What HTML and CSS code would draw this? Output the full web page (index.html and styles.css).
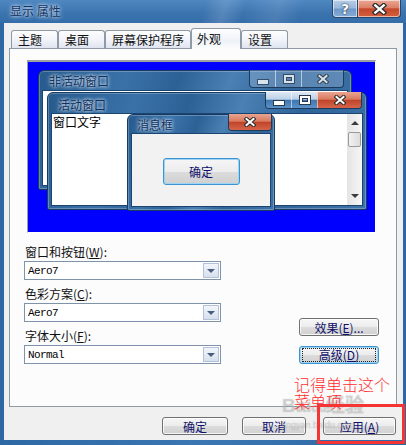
FILE: index.html
```html
<!DOCTYPE html>
<html lang="zh-CN">

<head>
  <meta charset="UTF-8">
  <meta name="viewport" content="width=device-width, initial-scale=1.0">
  <title>显示 属性</title>
  <link rel="stylesheet" href="styles.css">
</head>

<body>
  <svg class="defs" width="0" height="0">
    <defs>
      <symbol id="ico-x" viewBox="0 0 12 10">
        <path d="M2.5 2 L9.5 8 M9.5 2 L2.5 8" stroke="#2b2b2b" stroke-width="4" stroke-linecap="square" fill="none" />
        <path d="M2.5 2 L9.5 8 M9.5 2 L2.5 8" stroke="#fff" stroke-width="2" stroke-linecap="square" fill="none" />
      </symbol>
    </defs>
  </svg>

  <div class="window">
    <div class="titlebar">
      <span class="title">显示 属性</span>
      <div class="caption">
        <span class="cap help">?</span>
        <span class="cap close"><svg width="15" height="12"><use href="#ico-x" /></svg></span>
      </div>
    </div>

    <div class="frame">
      <div class="tabs">
        <div class="tab">主题</div>
        <div class="tab">桌面</div>
        <div class="tab">屏幕保护程序</div>
        <div class="tab selected">外观</div>
        <div class="tab">设置</div>
      </div>

      <div class="panel">
        <div class="preview">
          <div class="desktop">
            <!-- 非活动窗口 -->
            <div class="pw pw-inactive">
              <div class="pw-title">
                <span>非活动窗口</span>
                <div class="pbs">
                  <span class="pb min"><i></i></span>
                  <span class="pb max"><i></i></span>
                  <span class="pb x"><svg width="12" height="10"><use href="#ico-x" /></svg></span>
                </div>
              </div>
              <div class="pw-body"></div>
            </div>

            <!-- 活动窗口 -->
            <div class="pw pw-active">
              <div class="pw-title">
                <span>活动窗口</span>
                <div class="pbs">
                  <span class="pb min"><i></i></span>
                  <span class="pb max"><i></i></span>
                  <span class="pb x red"><svg width="12" height="10"><use href="#ico-x" /></svg></span>
                </div>
              </div>
              <div class="pw-body">
                <span class="win-text">窗口文字</span>
                <div class="sb">
                  <span class="sb-btn"><i class="up"></i></span>
                  <span class="sb-thumb"></span>
                  <span class="sb-fill"></span>
                  <span class="sb-btn"><i class="down"></i></span>
                </div>
              </div>
            </div>

            <!-- 消息框 -->
            <div class="pw pw-msg">
              <div class="pw-title">
                <span>消息框</span>
                <div class="pbs">
                  <span class="pb x red"><svg width="12" height="10"><use href="#ico-x" /></svg></span>
                </div>
              </div>
              <div class="pw-body">
                <button class="btn default">确定</button>
              </div>
            </div>
          </div>
        </div>

        <div class="options">
          <div class="fields">
            <label>窗口和按钮(<u>W</u>):</label>
            <div class="combo"><span>Aero7</span><span class="drop"></span></div>
            <label>色彩方案(<u>C</u>):</label>
            <div class="combo"><span>Aero7</span><span class="drop"></span></div>
            <label>字体大小(<u>F</u>):</label>
            <div class="combo"><span>Normal</span><span class="drop"></span></div>
          </div>
          <div class="side">
            <button class="btn">效果(<u>E</u>)...</button>
            <button class="btn focus"><span>高级(<u>D</u>)</span></button>
          </div>
        </div>
      </div>

      <div class="footer">
        <button class="btn ok">确定</button>
        <button class="btn cancel">取消</button>
        <button class="btn apply">应用(<u>A</u>)</button>
      </div>
    </div>

    <!-- 标注 -->
    <div class="watermark">Bai<span class="paw">du</span>经验<small>jingyan.baidu.com</small></div>
    <div class="note">记得单击这个<br>菜单项</div>
    <div class="mark"></div>
  </div>
</body>

</html>
```

FILE: styles.css
```css
* {
  box-sizing: border-box;
  margin: 0;
  padding: 0
}

body {
  width: 406px;
  height: 445px;
  overflow: hidden;
  font-family: "Noto Sans CJK SC", "Liberation Sans", sans-serif;
  font-size: 12px;
  color: #111;
}

.defs {
  position: absolute;
}

.window {
  position: relative;
  width: 406px;
  height: 445px;
  display: flex;
  flex-direction: column;
  background: linear-gradient(90deg, #2d67a4, #3b76b3 50%, #2d67a4);
}

/* title bar */
.titlebar {
  height: 23px;
  display: flex;
  background:
    linear-gradient(105deg, transparent 50%, rgba(255, 255, 255, .14) 55%, transparent 60%, rgba(255, 255, 255, .1) 68%, transparent 74%),
    linear-gradient(#4f87c1, #3b73ae 60%, #356daa);
}

.title {
  padding: 3px 0 0 10px;
  line-height: 16px;
  color: #15335f;
  text-shadow: 0 0 3px #cfe1f3, 0 0 5px #cfe1f3;
}

.caption {
  display: flex;
  height: 18px;
  margin: 0 5px 0 auto;
}

.cap {
  display: flex;
  align-items: center;
  justify-content: center;
  border: 1px solid #27466d;
  border-top: none;
  box-shadow: inset 0 0 0 1px rgba(255, 255, 255, .55);
}

.cap.help {
  width: 26px;
  border-radius: 0 0 0 4px;
  background: linear-gradient(#b6cde6, #9ab9dc 48%, #6f98c8 52%, #86acd6);
  color: #fff;
  font: bold 14px "DejaVu Sans", sans-serif;
  text-shadow: 0 0 2px #1d3552, 0 0 1px #1d3552;
}

.cap.close {
  width: 43px;
  border-left: none;
  border-radius: 0 0 4px 0;
  background: linear-gradient(#eaa896, #dc8067 46%, #c5482c 52%, #d4603f);
}

/* client */
.frame {
  flex: 1;
  margin: 0 3px 5px 4px;
  padding-top: 5px;
  display: flex;
  flex-direction: column;
  background: #f0f0f0;
}

.tabs {
  display: flex;
  align-items: flex-end;
  height: 20px;
  margin-left: 7px;
  position: relative;
  z-index: 1;
}

.tab {
  min-width: 47px;
  height: 18px;
  padding: 0 6px;
  line-height: 17px;
  white-space: nowrap;
  border: 1px solid #8e9aa6;
  border-bottom: none;
  border-radius: 3px 3px 0 0;
  background: linear-gradient(#fdfdfe, #f2f4f9 50%, #dfe4ef);
}

.tab.selected {
  min-width: 50px;
  height: 21px;
  margin-bottom: -1px;
  padding: 1px 5px 0;
  background: linear-gradient(#fefefe, #eef2f8 60%, #fcfcfc);
}

.panel {
  height: 359px;
  margin: 0 6px 0 5px;
  border: 1px solid #8e9aa6;
  background: #fcfcfc;
}

.preview {
  width: 349px;
  margin: 11px 0 0 17px;
  border: 1px solid #fff;
  border-top: 2px solid #a0a0a0;
  border-left-color: #a0a0a0;
}

.desktop {
  position: relative;
  height: 170px;
  background: #0000ff;
}

/* preview windows */
.pw {
  position: absolute;
  display: flex;
  flex-direction: column;
  padding: 0 3px 3px;
  border: 1px solid #163a62;
  border-radius: 6px 6px 2px 2px;
  background:
    linear-gradient(110deg, #275a8d, #3a72a8 25%, #2c6196 40%, #4a80b4 55%, #2f6498 72%, #3d73a8);
  box-shadow: inset 0 0 0 1px rgba(255, 255, 255, .25);
}

.pw-inactive {
  left: 10px;
  top: 8px;
  width: 314px;
  height: 120px;
}

.pw-active {
  left: 19px;
  top: 30px;
  width: 320px;
  height: 118px;
}

.pw-msg {
  left: 99px;
  top: 52px;
  width: 148px;
  height: 97px;
}

.pw-title {
  display: flex;
  height: 19px;
}

.pw-active .pw-title {
  height: 20px;
}

.pw-msg .pw-title {
  height: 18px;
}

.pw-title>span {
  padding: 3px 0 0 7px;
  line-height: 14px;
  color: #13305a;
  text-shadow: 0 0 3px #d6e6f6, 0 0 4px #d6e6f6;
}

.pw-active .pw-title>span {
  padding-top: 5px;
}

.pw-msg .pw-title>span {
  padding-left: 6px;
}

.pbs {
  display: flex;
  height: 18px;
  margin: -1px 4px 0 auto;
  border: 1px solid #1c3a5c;
  border-top: none;
  border-radius: 0 0 4px 4px;
  overflow: hidden;
}

.pw-active .pbs {
  height: 17px;
  margin-right: 1px;
}

.pw-msg .pbs {
  height: 17px;
  margin-right: -1px;
}

.pb {
  display: flex;
  align-items: center;
  justify-content: center;
  width: 25px;
  border-left: 1px solid rgba(255, 255, 255, .55);
  background: rgba(190, 210, 235, .3);
}

.pb:first-child {
  border-left: none;
}

.pb.max {
  width: 26px;
}

.pb.x {
  width: 42px;
}

.pw-active .pb {
  background: linear-gradient(#dfe9f4, #bcd1e7 45%, #3f77b1 52%, #5c92c8);
}

.pw-active .pb.x {
  width: 44px;
}

.pb.red,
.pw-active .pb.red {
  background: linear-gradient(#eba592, #d97a5f 45%, #c0442a 52%, #d6654a);
}

.pb.min i {
  width: 10px;
  height: 4px;
  margin-top: 6px;
  background: #fff;
  box-shadow: 0 0 0 1px #2a3a4e;
}

.pb.max i {
  width: 10px;
  height: 8px;
  border: 2px solid #fff;
  box-shadow: 0 0 0 1px #2a3a4e, inset 0 0 0 1px #2a3a4e;
}

.pw-inactive .pb i,
.pw-inactive .pb svg {
  opacity: .75;
}

.pw-body {
  flex: 1;
  display: flex;
  background: #fff;
  border: 1px solid #1b4470;
}

.win-text {
  padding: 1px 0 0 1px;
  line-height: 14px;
  color: #000;
}

.sb {
  width: 15px;
  margin-left: auto;
  display: flex;
  flex-direction: column;
  background: linear-gradient(90deg, #e4e4e4, #f6f6f6);
}

.sb-btn {
  height: 18px;
  display: flex;
  align-items: center;
  justify-content: center;
}

.sb-thumb {
  height: 15px;
  margin: 0 1px;
  border: 1px solid #9a9a9a;
  border-radius: 2px;
  background: linear-gradient(90deg, #f2f2f2, #dcdcdc);
}

.sb-fill {
  flex: 1;
}

.sb-btn i {
  width: 0;
  border-left: 4px solid transparent;
  border-right: 4px solid transparent;
}

.sb-btn .up {
  border-bottom: 4px solid #3a3a3a;
}

.sb-btn .down {
  border-top: 4px solid #3a3a3a;
}

.pw-msg .pw-body {
  justify-content: center;
  align-items: flex-start;
  padding-top: 24px;
  background: #f2f2f2;
}

/* buttons */
.btn {
  height: 18px;
  border: 1px solid #707070;
  border-radius: 3px;
  background: linear-gradient(#f6f6f6, #ececec 50%, #dcdcdc 52%, #d0d0d0);
  box-shadow: inset 0 0 0 1px rgba(255, 255, 255, .8);
  font: 12px "Noto Sans CJK SC", "Liberation Sans", sans-serif;
  line-height: 15px;
  color: #10106a;
}

.btn.default {
  width: 77px;
  height: 27px;
  border-color: #3c95d0;
  box-shadow: inset 0 0 0 1px #9fd3f3;
}

.btn.focus {
  border-color: #3c95d0;
  box-shadow: inset 0 0 0 1px #9fd3f3;
}

.btn.focus span {
  display: block;
  margin: 0 2px;
  border: 1px dotted #222;
  line-height: 12px;
}

/* options */
.options {
  display: flex;
  justify-content: space-between;
  align-items: flex-end;
  margin-top: 12px;
  padding: 0 17px 0 14px;
}

.fields {
  width: 197px;
}

.fields label {
  display: block;
  height: 14px;
  margin-bottom: 2px;
  padding-left: 1px;
  line-height: 14px;
  color: #111;
}

.combo {
  display: flex;
  align-items: center;
  height: 19px;
  margin-bottom: 7px;
  padding: 0 1px 0 3px;
  border: 1px solid #7f93aa;
  background: #fff;
  font: 11px "Liberation Mono", monospace;
  letter-spacing: -0.6px;
  color: #000;
}

.combo:last-child {
  margin-bottom: 0;
}

.drop {
  width: 16px;
  height: 15px;
  margin-left: auto;
  display: flex;
  align-items: center;
  justify-content: center;
  border: 1px solid #b3c2d6;
  background: linear-gradient(#f2f6fb, #d6e0ec);
}

.drop::after {
  content: '';
  border-left: 4px solid transparent;
  border-right: 4px solid transparent;
  border-top: 4px solid #4a5d80;
}

.side {
  display: flex;
  flex-direction: column;
  gap: 10px;
}

.side .btn {
  width: 80px;
}

/* footer */
.footer {
  display: flex;
  justify-content: flex-end;
  padding: 10px 7px 0 0;
}

.btn.ok {
  width: 66px;
}

.btn.cancel {
  width: 64px;
  margin-left: 14px;
}

.btn.apply {
  width: 73px;
  margin-left: 17px;
}

/* annotation */
.note {
  position: absolute;
  left: 294px;
  top: 376px;
  font-size: 16px;
  line-height: 17px;
  font-weight: 300;
  color: #ff2e2e;
}

.mark {
  position: absolute;
  left: 317px;
  top: 404px;
  width: 88px;
  height: 40px;
  border: 3px solid #f53434;
}

.watermark {
  position: absolute;
  left: 282px;
  top: 396px;
  font: bold 19px "Liberation Sans", sans-serif;
  line-height: 20px;
  color: rgba(255, 255, 255, .35);
  text-shadow: 0 0 1px rgba(90, 90, 90, .45);
}

.watermark .paw {
  font-size: 12px;
}

.watermark small {
  display: block;
  font: 9px "Liberation Sans", sans-serif;
  line-height: 14px;
}
```
